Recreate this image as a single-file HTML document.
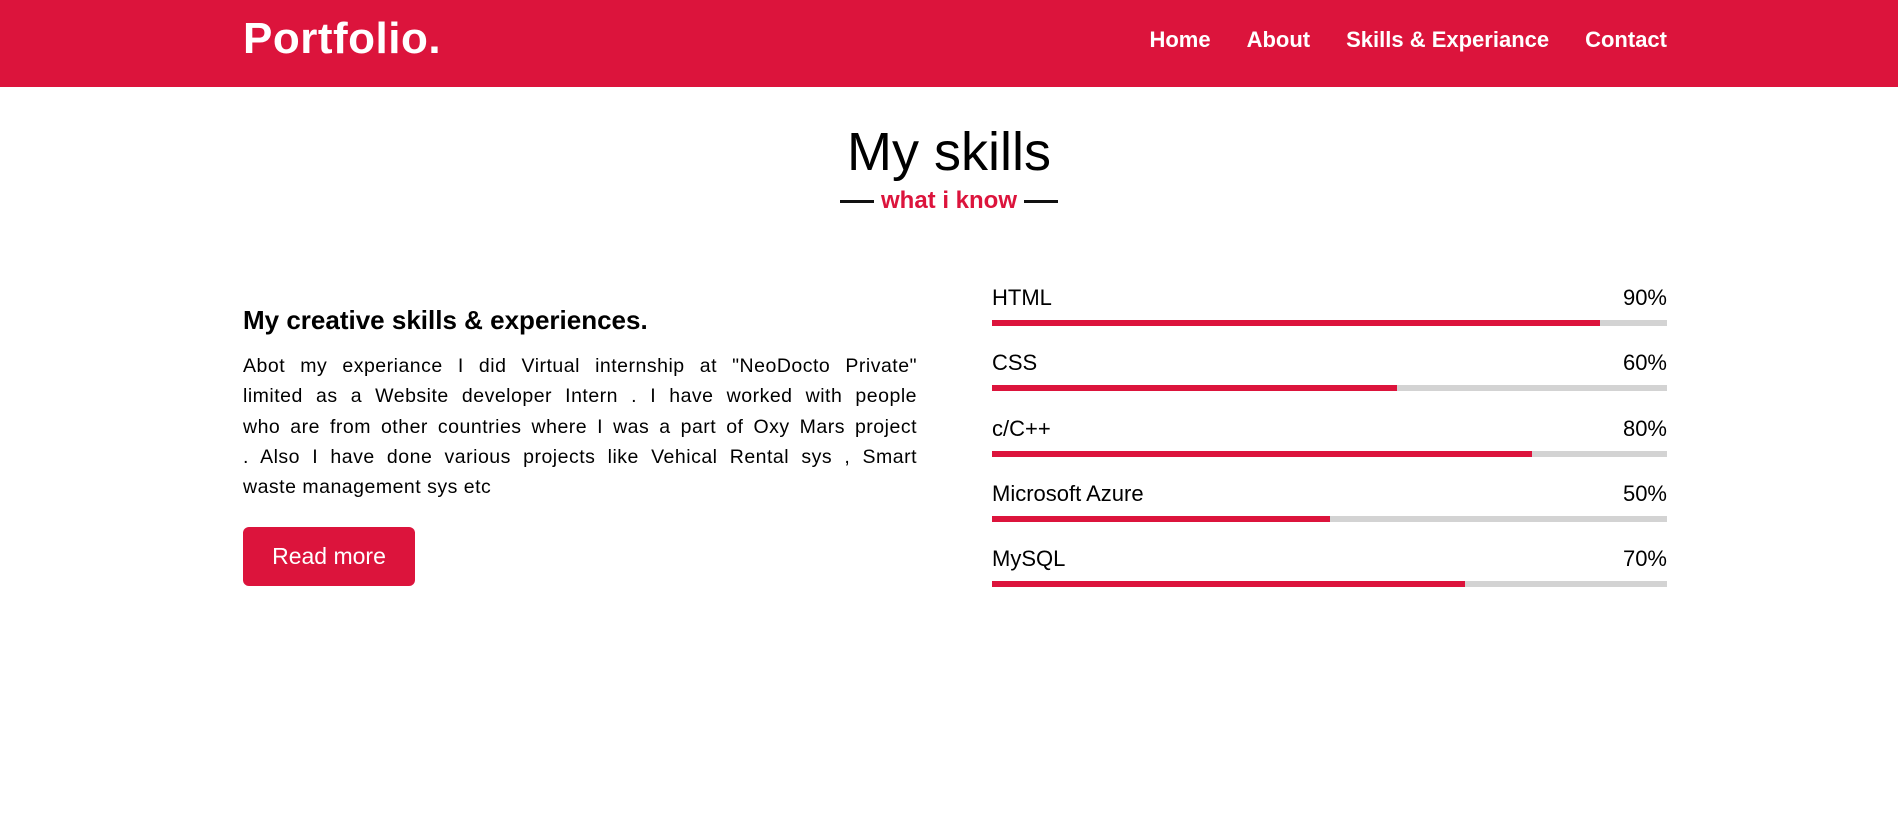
<!DOCTYPE html>
<html><head><meta charset="utf-8"><style>
*{margin:0;padding:0;box-sizing:border-box}
body{width:1898px;height:840px;background:#fff;font-family:"Liberation Sans",sans-serif;color:#000;overflow:hidden;position:relative}
.nav{position:absolute;left:0;top:0;width:1898px;height:87px;background:#dc143c}
.logo{position:absolute;left:243px;top:14px;color:#fff;font-size:44px;font-weight:bold;letter-spacing:0.5px}
.menu{position:absolute;right:231px;top:27px;display:flex;gap:36px;color:#fff;font-size:22px;font-weight:bold}
.title{position:absolute;left:0;width:1898px;top:120px;text-align:center;font-size:54px;line-height:64px}
.sub{position:absolute;left:0;width:1898px;top:186px;text-align:center;font-size:24px;color:#dc143c;font-weight:bold;line-height:30px}
.sub span{display:inline-block;width:34px;height:3px;background:#111;vertical-align:middle;margin:0 7px}
h3{position:absolute;left:243px;top:305px;font-size:26px;font-weight:bold;width:680px}
.p{position:absolute;left:243px;top:351px;width:674px;font-size:19.5px;letter-spacing:0.5px;line-height:30.3px}
.p div{text-align:justify;text-align-last:justify;white-space:nowrap}
.p div.last{text-align-last:left}
.btn{position:absolute;left:243px;top:527px;width:172px;height:59px;background:#dc143c;border-radius:6px;color:#fff;font-size:23px;text-align:center;line-height:59px}
.row{position:absolute;left:992px;width:675px;font-size:22px}
.row .l{position:absolute;left:0;top:0}
.row .r{position:absolute;right:0;top:0}
.bar{position:absolute;left:0;top:35px;width:675px;height:6px;background:#d3d3d3}
.bar i{display:block;height:6px;background:#dc143c}
</style></head><body>
<div class="nav"><div class="logo">Portfolio.</div>
<div class="menu"><span>Home</span><span>About</span><span>Skills &amp; Experiance</span><span>Contact</span></div></div>
<div class="title">My skills</div>
<div class="sub"><span></span>what i know<span></span></div>
<h3>My creative skills &amp; experiences.</h3>
<div class="p">
<div>Abot my experiance I did Virtual internship at "NeoDocto Private"</div>
<div>limited as a Website developer Intern . I have worked with people</div>
<div>who are from other countries where I was a part of Oxy Mars project</div>
<div>. Also I have done various projects like Vehical Rental sys , Smart</div>
<div class="last">waste management sys etc</div>
</div>
<div class="btn">Read more</div>
<div class="row" style="top:285px"><span class="l">HTML</span><span class="r">90%</span><div class="bar"><i style="width:90%"></i></div></div>
<div class="row" style="top:350px"><span class="l">CSS</span><span class="r">60%</span><div class="bar"><i style="width:60%"></i></div></div>
<div class="row" style="top:416px"><span class="l">c/C++</span><span class="r">80%</span><div class="bar"><i style="width:80%"></i></div></div>
<div class="row" style="top:481px"><span class="l">Microsoft Azure</span><span class="r">50%</span><div class="bar"><i style="width:50%"></i></div></div>
<div class="row" style="top:546px"><span class="l">MySQL</span><span class="r">70%</span><div class="bar"><i style="width:70%"></i></div></div>
</body></html>
